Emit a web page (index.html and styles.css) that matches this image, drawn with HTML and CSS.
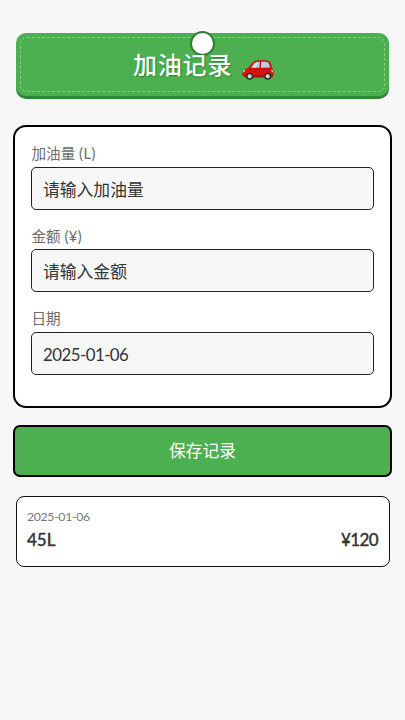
FILE: index.html
```html
<!DOCTYPE html>
<html lang="zh-CN">
<head>
<meta charset="UTF-8">
<title>加油记录</title>
<link rel="stylesheet" href="styles.css">
</head>
<body>
<header class="banner">
  <span class="hole"></span>
  <h1 class="title">加油记录</h1>
  <svg class="car" viewBox="0 0 34 22">
    <path d="M1.2 14.5C1.2 11.5 3 9.7 7 9.1L11 4.1Q13 1.3 18 1.2H24.5Q29 1.2 30 4.8L31.2 9Q33 10.5 32.8 15.5L31.5 18H4L1.5 17Z" fill="#d5140f"/>
    <path d="M4 16.2H32L31.4 18.4H4Z" fill="#951713"/>
    <path d="M10 8.8L13 4.4Q14.5 2.8 18.8 2.8L18.3 8.8ZM20.2 2.8H24.5Q27.4 2.8 28.1 5.2L29 8.5L19.8 8.8Z" fill="#b7cce7"/>
    <path d="M12 8.5L16 3.2H17.5L14 8.5Z" fill="#e0ebf8"/>
    <path d="M19 9V16.5M8 10.5H29" fill="none" stroke="#b50e12" stroke-width=".6"/>
    <path d="M1.8 13.5Q2 11 4.2 10.5Q4.5 13 1.8 13.5ZM30.5 10.5L32 11.7V13.5Q30 13 30.5 10.5Z" fill="#ffe0a3"/>
    <circle cx="8.7" cy="17.3" r="3.5" fill="#352a2b"/>
    <circle cx="8.7" cy="17.3" r="2" fill="#d9d7d4"/>
    <circle cx="26.7" cy="17.3" r="3.5" fill="#352a2b"/>
    <circle cx="26.7" cy="17.3" r="2" fill="#d9d7d4"/>
  </svg>
</header>
<main>
  <form class="card">
    <label class="label">加油量 <span class="unit">(L)</span></label>
    <div class="field">请输入加油量</div>
    <label class="label">金额 <span class="unit">(¥)</span></label>
    <div class="field">请输入金额</div>
    <label class="label">日期</label>
    <div class="field date">2025-01-06</div>
  </form>
  <div class="save">保存记录</div>
  <section class="record">
    <div class="record-date">2025-01-06</div>
    <div class="record-row"><span>45L</span><span class="price">¥120</span></div>
  </section>
</main>
</body>
</html>
```
FILE: styles.css
```css
* { box-sizing: border-box; }
body {
  margin: 0;
  padding: 33px 13px 0;
  min-height: 720px;
  background: #f7f7f7;
  color: #333;
  font-family: Lato, "Noto Sans CJK SC", sans-serif;
}
.banner {
  position: relative;
  display: flex;
  align-items: center;
  height: 63px;
  margin: 0 3px;
  padding-left: 117px;
  border-radius: 10px;
  background: #4caf50;
  box-shadow: 0 3px 0 #2f8637;
}
.banner::before {
  content: "";
  position: absolute;
  inset: 4px;
  border: 1px dashed #83ce86;
  border-radius: 7px;
}
.hole {
  position: absolute;
  left: 174px;
  top: -2px;
  width: 25px;
  height: 25px;
  border: 2px solid #2e7d32;
  border-radius: 50%;
  background: #fff;
}
.title {
  position: relative;
  margin: 0;
  color: #fff;
  font-size: 24px;
  font-weight: 500;
  line-height: 36px;
  letter-spacing: .8px;
  text-shadow: 1px 1px 1px rgba(30, 100, 35, .6);
}
.car {
  width: 34px;
  height: 22px;
  margin: 10px 0 0 8.5px;
}
.card {
  height: 283px;
  margin-top: 29px;
  padding: 17px 16px 0 16px;
  border: 2.5px solid #000;
  border-radius: 13px;
  background: #fff;
}
.label {
  display: block;
  height: 22.5px;
  padding-left: .5px;
  color: #6b6b6b;
  font-size: 14.6px;
  line-height: 20px;
}
.unit { letter-spacing: .5px; }
.field {
  height: 43px;
  margin-bottom: 17px;
  padding-left: 11px;
  border: 1px solid #222;
  border-radius: 5px;
  background: #f7f7f7;
  color: #333;
  font-size: 16.8px;
  line-height: 43px;
}
.date { letter-spacing: -.5px; }
.save {
  height: 52px;
  margin-top: 17px;
  border: 2.5px solid #000;
  border-radius: 7px;
  background: #4caf50;
  color: #fff;
  font-size: 16.8px;
  line-height: 48px;
  text-align: center;
}
.record {
  height: 70.5px;
  margin: 19px 2.5px 0;
  padding: 12px 10.5px 0;
  border: 1.3px solid #111;
  border-radius: 8px;
  background: #fff;
}
.record-date {
  color: #777;
  font-size: 12.3px;
  line-height: 16px;
  letter-spacing: -.35px;
}
.record-row {
  display: flex;
  justify-content: space-between;
  margin-top: 4px;
  font-size: 17px;
  font-weight: 500;
  line-height: 22px;
  -webkit-text-stroke: .3px #333;
}
.price { letter-spacing: -.6px; }
```
